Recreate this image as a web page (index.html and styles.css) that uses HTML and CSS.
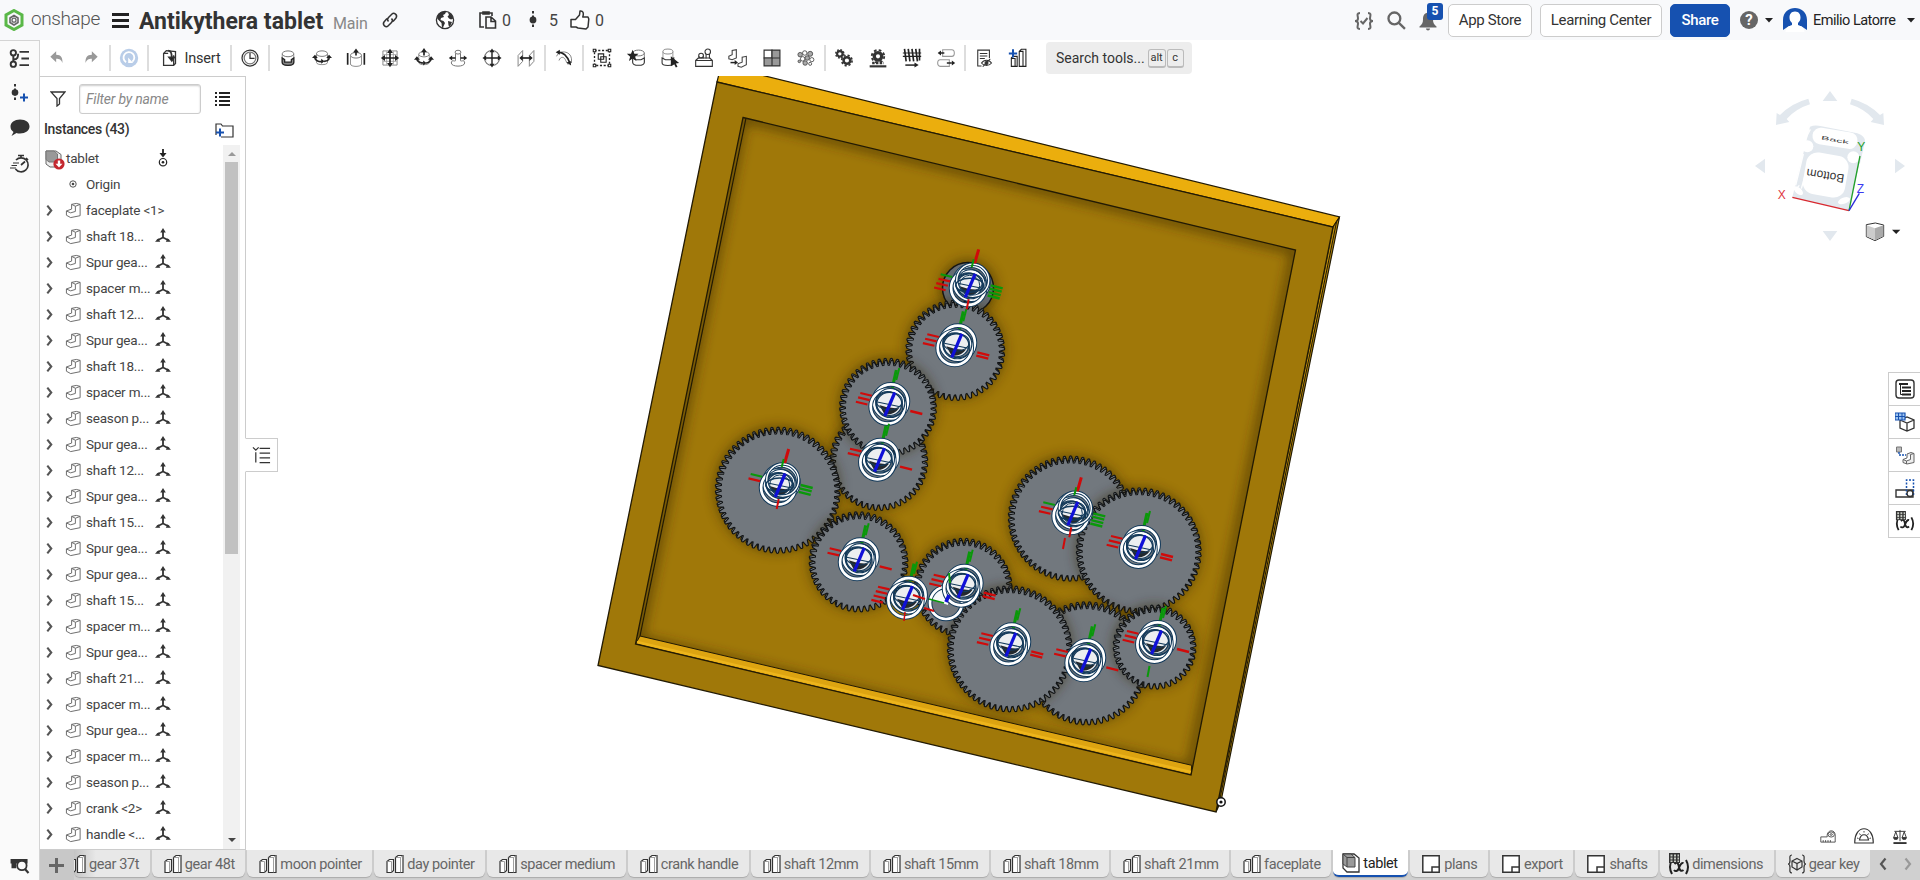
FILE: index.html
```html
<!DOCTYPE html>
<html lang="en">
<head>
<meta charset="utf-8">
<title>Antikythera tablet</title>
<link rel="stylesheet" href="styles.css">
</head>
<body>
<svg class="defs" width="0" height="0">
  <symbol id="caret" viewBox="0 0 10 6"><path d="M0 0h10L5 5.5z" fill="#222"/></symbol>
  <symbol id="part" viewBox="0 0 18 18"><path d="M1.500 9.500 7 7.500V2.500L12 1.500l4 1v12L6 16.500l-4.500-2.500zM1.500 9.500l4.500 2 5-1.500V4.500L7 2.500M11 4.500l5-2" fill="#fff" stroke="#666" stroke-width="1" stroke-linejoin="round"/></symbol>
  <symbol id="axes" viewBox="0 0 16 16"><path d="M8 2v8M8 9.500 2 12.500M8 9.500l6 3" stroke="#333" stroke-width="1.800" fill="none"/><path d="M8 0l2.800 4.500H5.200zM0 13.800l3.400-3.600 1.800 3.600zM16 13.800l-3.400-3.600-1.800 3.600z" fill="#333"/></symbol>
  <symbol id="chev" viewBox="0 0 8 14"><path d="M1.500 1.500 6 7l-4.500 5.500" fill="none" stroke="#555" stroke-width="2.400"/></symbol>
  <symbol id="studio" viewBox="0 0 18 20"><path d="M1 7.500 3.500 5.500H7.500V16.500L5.500 18.500H1z" fill="#fff" stroke="#333" stroke-width="1.200"/><path d="M1 7.500h4.500v11" fill="none" stroke="#888" stroke-width=".8"/><path d="M9.500 3.500 12 1.500h5v17H9.500z" fill="#fff" stroke="#333" stroke-width="1.200"/><path d="M9.500 3.500h5v15M14.500 3.500 17 1.500" fill="none" stroke="#888" stroke-width=".8"/></symbol>
  <symbol id="sheet" viewBox="0 0 18 18"><path d="M.8 .8h16.400v16.400H.8zM10 17v-5h7" fill="#fff" stroke="#333" stroke-width="1.500"/></symbol>
  <symbol id="asm" viewBox="0 0 18 20"><path d="M1 1h11l5 4v14H5l-4-4z" fill="#fff" stroke="#333" stroke-width="1.300"/><path d="M1 1h8l4 3.500V14H5l-4-3z" fill="#999" stroke="#444"/><path d="M5 4.500h8M5 4.500V14M5 4.500 1 1" stroke="#444" fill="none"/></symbol>
  <symbol id="varx" viewBox="0 0 22 22"><path d="M4 7Q0 14 4 21M18 7q4 7 0 14" fill="none" stroke="#222" stroke-width="2"/><path d="M6.500 11c3-3 4 0 4.500 3s2 5 4.500 3M15.500 10c-3-1-4 4-5 6s-3 3-4.500 1" fill="none" stroke="#222" stroke-width="2"/><path d="M1 0h11v10H1z" fill="#333"/><path d="M2.500 1.500h2v2h-2zm3.500 0h2v2H6zm3.500 0h1.500v2H9.500zM2.500 4.500h2v2h-2zm3.500 0h2v2H6zm3.500 0h1.500v2H9.500zM2.500 7.500h2v1.500h-2zm3.500 0h2v1.500H6zm3.500 0h1.500v1.500H9.500z" fill="#c8ccc4"/></symbol>
  <symbol id="cyl" viewBox="0 0 16 20"><path d="M1 5v11c0 4 14 4 14 0V5" fill="#fff" stroke="#888" stroke-width="1.200"/><ellipse cx="8" cy="5" rx="7" ry="3.500" fill="#fff" stroke="#777" stroke-width="1.200"/></symbol>
</svg>

<header class="top">
  <svg class="logo" viewBox="0 0 20 22"><path d="M10 1.500 18 6v10l-8 4.500L2 16V6z" fill="none" stroke="#5ab848" stroke-width="3"/><path d="M10 6.500 14 9v4.500L10 16l-4-2.500V9z" fill="none" stroke="#666" stroke-width="1.600"/><circle cx="10" cy="11.200" r="2" fill="none" stroke="#666" stroke-width="1.300"/></svg>
  <span class="brand">onshape</span>
  <i class="burger"></i>
  <h1>Antikythera tablet</h1>
  <span class="main">Main</span>
  <svg class="link" viewBox="0 0 18 18" fill="none" stroke="#333" stroke-width="1.500"><path d="M7.500 10.500c-1.500-1.500-1-3 0-4L11 3c2-2 6 1 4 4l-3 3.500"/><path d="M10.500 7.500c1.500 1.500 1 3 0 4L7 15c-2 2-6-1-4-4l3-3.500"/></svg>
  <svg class="globe" viewBox="0 0 20 20"><circle cx="10" cy="10" r="8.600" fill="#fff" stroke="#333" stroke-width="1.300"/><path d="M3 4.500C5 2 9 1 11 2l-1 2-2 1 1 2-3 1-.5 2 3 1 1.500 2-2 4.500-1 .5-.5-5L3 9.500 2 8zM13 2.500c3 1 5 3.500 5.300 6L16 9.500l-2-1-1.500-2L14 5zM13 11l4 1-2 4.500-1.500-1z" fill="#333"/></svg>
  <svg class="clip" viewBox="0 0 18 20" fill="none" stroke="#333" stroke-width="1.600"><path d="M5 17H1V3h12v3M4 4V2h6v2z"/><path d="M7 7h5l4.500 4v7H7zM12 7v4.500h4"/></svg>
  <b class="n n1">0</b>
  <svg class="ver" viewBox="0 0 8 20"><path d="M4 1v18" stroke="#333" stroke-width="2" stroke-dasharray="2.500 2"/><circle cx="4" cy="10" r="3.400" fill="#333"/></svg>
  <b class="n n2">5</b>
  <svg class="thumb" viewBox="0 0 20 20"><path d="M1 9.500h4.500L9.500 5l.5-4c3-.5 4 2 2.800 6H18l.8 2-.8 8-2 2-8-1-2-1H1z" fill="#fff" stroke="#333" stroke-width="1.500" stroke-linejoin="round"/></svg>
  <b class="n n3">0</b>
  <div class="right">
    <svg class="chk" viewBox="0 0 20 18" fill="none" stroke="#666" stroke-width="2"><path d="M6 1C2 1 4 4 4 6.500S2 9 1 9c1 0 3 0 3 2.500S2 17 6 17M14 1c4 0 2 3 2 5.500S18 9 19 9c-1 0-3 0-3 2.500s2 5.500-2 5.500M6.500 9l2.500 2.500L13.500 6"/></svg>
    <svg class="mag" viewBox="0 0 18 18" fill="none" stroke="#666" stroke-width="2.200"><circle cx="7" cy="7" r="5.600"/><path d="m11 11 6 6"/></svg>
    <span class="bell"><svg viewBox="0 0 18 18"><path d="M9 0c4.500 1 5 4 5 7 0 3.500 1 5 3.500 7v1H.5v-1C3 12 4 10.500 4 7c0-3 .5-6 5-7zM7 16h4c0 2.500-4 2.500-4 0z" fill="#666"/></svg><em>5</em></span>
    <button class="btn app">App Store</button>
    <button class="btn learn">Learning Center</button>
    <button class="btn share">Share</button>
    <span class="help">?</span>
    <svg class="caret c1"><use href="#caret"/></svg>
    <svg class="avatar" viewBox="0 0 24 24"><path d="M0 22V12C0-4 24-4 24 12v10l-6-4H6z" fill="#1651b0"/><path d="M12 3.500c4 0 5.500 3 5.500 6 0 2.500-1 4-2.500 5.500v2c4 1.500 6 3 6.500 7h-19C3 20 5 18.500 9 17v-2c-1.500-1.500-2.500-3-2.500-5.500 0-3 1.500-6 5.500-6z" fill="#fff"/></svg>
    <span class="user">Emilio Latorre</span>
    <svg class="caret c2"><use href="#caret"/></svg>
  </div>
</header>

<div class="work">
  <nav class="rail">
    <svg class="r1" viewBox="0 0 22 20" fill="none" stroke="#333" stroke-width="2"><circle cx="4.500" cy="4" r="2.800"/><circle cx="4.500" cy="16" r="2.800"/><path d="M4.500 7v6M4.500 11c5 0 5-3 5-6M11 3h10M13 10h8M11 17h10"/></svg>
    <svg class="r2" viewBox="0 0 24 20"><path d="M5 1v18" stroke="#333" stroke-width="2" stroke-dasharray="2.500 2"/><circle cx="5" cy="9.500" r="3.300" fill="#333"/><path d="M14 10.500v8M10 14.500h8" stroke="#1651b0" stroke-width="2"/></svg>
    <svg class="r3" viewBox="0 0 20 18"><path d="M10 .5c6 0 9.500 3 9.500 7s-4 7-9.500 7c-1.500 0-2.500 0-3.500-.5L1.500 17l2-4C1.500 11.500.5 10 .5 7.500c0-4 4-7 9.500-7z" fill="#333"/></svg>
    <svg class="r4" viewBox="0 0 20 20" fill="none" stroke="#333" stroke-width="1.700"><path d="M6 6a7 7 0 1 1-.5 9M8 1.500h6M11 2v2.500M11 11l4-3.500M16 4l2 2"/><path d="M3 9h6M1.500 11.500H7M0 14h6" stroke-width="1.200"/></svg>
    <svg class="r5" viewBox="0 0 20 18"><path d="M0 2h18v5H6v5H1V7H0z" fill="#333"/><circle cx="12" cy="9" r="5" fill="#fafafa" stroke="#333" stroke-width="1.900"/><path d="m15 12.500 4 4.500" stroke="#333" stroke-width="2.300"/></svg>
  </nav>
  <div class="body">
    <div class="tools">
      <span><svg viewBox="0 0 24 24"><path d="M4 10.500 11 4v4c6 0 8 4 7.500 10C17 14 15 13 11 13v4z" fill="#999"/></svg></span>
      <span><svg viewBox="0 0 24 24"><path d="M20 10.500 13 4v4C7 8 5 12 5.500 18 7 14 9 13 13 13v4z" fill="#999"/></svg></span>
      <i></i>
      <span><svg viewBox="0 0 24 24"><circle cx="12" cy="12" r="11" fill="#b9cde8"/><path d="M8.500 17a6.500 6.500 0 1 1 7.500-.5" fill="none" stroke="#fff" stroke-width="2.200"/><path d="M11 11.500 17 18h-6z" fill="#fff"/></svg></span>
      <i></i>
      <span class="ins"><svg viewBox="0 0 24 24" fill="none" stroke="#333" stroke-width="1.400"><path d="m5 7 3-3 10 1v13l-2 2H5zM5 7h5M16 20V9"/><path d="M10 4c3 0 4 3 4 8" stroke-width="2"/><path d="m10.500 11 3.500 4.500 3-4.500z" fill="#222"/></svg><b>Insert</b></span>
      <i></i>
      <span><svg viewBox="0 0 24 24" fill="none" stroke="#333" stroke-width="1.500"><circle cx="12" cy="12" r="9.600"/><circle cx="12" cy="12" r="7" stroke="#777"/><path d="M12 6v6.500h5.500"/></svg></span>
      <i></i>
      <span><svg viewBox="0 0 24 24"><use href="#cyl" x="4" y="2" width="16" height="20"/><path d="M5 12v5c0 5 14 5 14 0v-5l-3 2v3H8v-3z" fill="#888" stroke="#222" stroke-width="1.500"/></svg></span>
      <span><svg viewBox="0 0 24 24"><use href="#cyl" x="4" y="2" width="16" height="19"/><path d="M3.500 12c0 3 6 5 8 4M20.500 12c0 3-4 4-6 4" fill="none" stroke="#222" stroke-width="2"/><path d="m0 12 3.500-4L7 12zM17 12l3.500-4 3.500 4zM11 13v6l4-3z" fill="#222"/></svg></span>
      <span><svg viewBox="0 0 24 24"><use href="#cyl" x="4" y="4" width="16" height="19"/><path d="M2 6v14M22 6v14M12 3v6" stroke="#222" stroke-width="2"/><path d="m8.500 5.500 3.500-5 3.500 5z" fill="#222"/></svg></span>
      <span><svg viewBox="0 0 24 24"><path d="M3.500 3.500h17v17h-17z" fill="none" stroke="#777"/><path d="M8 4v16M16 4v16M4 8h16M4 16h16" stroke="#999"/><path d="M12 4v16M4 12h16" stroke="#222" stroke-width="2"/><path d="m8.500 6 3.500-5 3.500 5zM8.500 18l3.500 5 3.500-5zM6 8.500 1 12l5 3.500zM18 8.500l5 3.500-5 3.500z" fill="#222"/></svg></span>
      <span><svg viewBox="0 0 24 24"><use href="#cyl" x="4" y="3" width="16" height="18"/><path d="M3.500 13c0 4 6 5 8 5M20.500 13c0 3-4 5-6 5M12 3v6" fill="none" stroke="#222" stroke-width="2"/><path d="m0 14 3.500-4L7 14zM17 14l3.500-4 3.500 4zM11 15v6l4-3zM8.500 5 12 0l3.500 5z" fill="#222"/></svg></span>
      <span><svg viewBox="0 0 24 24"><path d="M4 18c0 5 16 5 16 0s-5-1-5-3V5H9v10c0 2-5-2-5 3z" fill="#fff" stroke="#777" stroke-width="1.200"/><ellipse cx="12" cy="5" rx="3.500" ry="2.300" fill="#fff" stroke="#777" stroke-width="1.200"/><path d="M4 12h5M15 12h5" stroke="#222" stroke-width="2"/><path d="m1 12 4-3v6zM23 12l-4-3v6z" fill="#222"/></svg></span>
      <span><svg viewBox="0 0 24 24"><circle cx="12" cy="12" r="9" fill="none" stroke="#777" stroke-width="1.400"/><path d="M12 3v18M3 12h18" stroke="#222" stroke-width="1.700"/><path d="m9 5 3-4.500L15 5zM9 19l3 4.500 3-4.500zM5 9 .5 12 5 15zM19 9l4.500 3-4.500 3z" fill="#222"/></svg></span>
      <span><svg viewBox="0 0 24 24"><path d="M2.500 9 8 3v13l-5.500 6zM16 9l5.500-6v13L16 22z" fill="none" stroke="#888" stroke-width="1.200"/><path d="M7 12h10" stroke="#222" stroke-width="2"/><path d="m4 12 4-3.500v7zM20 12l-4-3.500v7z" fill="#222"/></svg></span>
      <i></i>
      <span><svg viewBox="0 0 24 24"><path d="M3 10c3-8 17-7 18 3v5M6 15c2-6 7-4 8 0l3 5" fill="none" stroke="#888" stroke-width="1.200"/><path d="M5 5c7 0 11 5 14 13" fill="none" stroke="#222" stroke-width="2"/><path d="m2 5 5-3v6zM20.500 21 15 17.500l5-2z" fill="#222"/></svg></span>
      <i></i>
      <span><svg viewBox="0 0 24 24" fill="none" stroke="#222"><path d="M3 3h18v18H3z" stroke-width="1.600" stroke-dasharray="2.500 2"/><path d="M1.500 1.500h3v3h-3zM19.500 1.500h3v3h-3zM1.500 19.500h3v3h-3zM19.500 19.500h3v3h-3z" fill="#fff" stroke-width="1.300"/><path d="M7.500 7h6.500v6.500H7.500zM10.500 10.500h6.500v6.500h-6.500z" stroke-width="1.300"/></svg></span>
      <span><svg viewBox="0 0 24 24"><use href="#cyl" x="7" y="1" width="16" height="20"/><path d="M8 12v5c0 5 14 5 14 0v-5l-4 2h-6z" fill="#fff" stroke="#333" stroke-width="1.300"/><path d="m8 2 2 5h5l-4 3.500 1.500 5L8 12.500l-4.500 3L5 10.500 1 7h5z" fill="#222"/></svg></span>
      <span><svg viewBox="0 0 24 24"><use href="#cyl" x="2" y="0" width="15" height="17"/><path d="M2.500 12v6c0 4 14 4 14 0v-6l-4 2h-6z" fill="#fff" stroke="#333" stroke-width="1.300"/><path d="m13 10 10 8-4 .5 2 4-2 1-2-4-4 2.500z" fill="#222"/></svg></span>
      <span><svg viewBox="0 0 24 24" fill="#fff" stroke="#333" stroke-width="1.300"><path d="M2 15h20v7H2zM2 15l3-3h14l3 3M6 13v-3h5v3M14.500 13V7h4v6"/><circle cx="8.500" cy="9" r="2.800"/><circle cx="16.500" cy="4.500" r="3.300"/></svg></span>
      <span><svg viewBox="0 0 24 24" fill="#fff" stroke="#444" stroke-width="1.300"><path d="M1 10 5 8V3l5-1v10l-5 2-4-1zM12 19l5-2v-6l5-1v10l-6 3-4-1z"/><path d="M3 17.500h6" stroke="#222" stroke-width="1.800"/><path d="m8 14.500 4 3-4 3z" fill="#222" stroke="none"/></svg></span>
      <span><svg viewBox="0 0 24 24"><path d="M2.500 2.500H12V12H2.500z" fill="#fff" stroke="#333" stroke-width="1.400"/><path d="M12 2.500h9.500V21.500h-19V12H12z" fill="#999" stroke="#333" stroke-width="1.400"/><path d="M12 12h9.500M12 12v9.500" stroke="#333" stroke-width="1.400"/></svg></span>
      <span><svg viewBox="0 0 24 24" fill="#aaa" stroke="#444" stroke-width="1"><circle cx="5" cy="8" r="2.700"/><circle cx="10.500" cy="6" r="2.700" fill="#fff"/><circle cx="17" cy="7" r="3"/><circle cx="8" cy="13" r="2.700" fill="#fff"/><circle cx="13.500" cy="12" r="2.700"/><circle cx="19" cy="14" r="2.500" fill="#fff"/><circle cx="11" cy="18" r="2.700"/><circle cx="4" cy="16" r="1.600"/><circle cx="17" cy="19" r="1.800" fill="#fff"/></svg></span>
      <i></i>
      <span><svg viewBox="0 0 24 24" fill="none" stroke="#333"><circle cx="7" cy="7" r="3.300" stroke-width="2.600"/><circle cx="7" cy="7" r="4.900" stroke-width="1.800" stroke-dasharray="2 1.850"/><circle cx="15.500" cy="15" r="4" stroke-width="3"/><circle cx="15.500" cy="15" r="6.200" stroke-width="2" stroke-dasharray="2.600 2.270"/></svg></span>
      <span><svg viewBox="0 0 24 24" fill="none" stroke="#333"><circle cx="12" cy="10" r="4.500" stroke-width="4"/><circle cx="12" cy="10" r="7.500" stroke-width="2.200" stroke-dasharray="3.200 2.690"/><path d="M5 18h14" stroke-width="3" stroke-dasharray="3 1.500"/><path d="M2 22h20" stroke-width="2.600"/></svg></span>
      <span><svg viewBox="0 0 24 24" fill="none" stroke="#222"><path d="M1 6h22M1 10h22" stroke-width="1.400"/><path d="m3 1 2 15M7.500 1l2 15M12 1l2 15M16.500 1l2 15M21 1v14" stroke-width="2"/><path d="M4 20.500h12" stroke-width="1.800"/><path d="m15 17.500 5 3-5 3z" fill="#222" stroke="none"/></svg></span>
      <span><svg viewBox="0 0 24 24" fill="#fff" stroke="#999" stroke-width="1.300"><path d="M8 2h11c4 0 4 8 0 8H8z"/><path d="M5 14h11v8H5c-4 0-4-8 0-8z"/><path d="M4 6h6M13 18h6" stroke="#222" stroke-width="1.800"/><path d="m2 6 4-3v6zM23 18l-4-3v6z" fill="#222" stroke="none"/></svg></span>
      <i></i>
      <span><svg viewBox="0 0 24 24" fill="none" stroke="#333" stroke-width="1.300"><path d="M9 21.500H4.500v-19h14V12M7 6.500h9M7 9.500h9M7 12.500h6"/><path d="M9 18c3-4.500 9-4.500 12 0-3 4-9 4-12 0z" fill="#fff"/><circle cx="15" cy="18" r="1.800" fill="#333"/><path d="m10.500 22.500 9-9.500"/></svg></span>
      <span><svg viewBox="0 0 24 24" fill="#fff" stroke="#222" stroke-width="1.300"><path d="M13.500 4 16 1.500h5.500V22h-8zM13.500 4H18v18M4 12l2-2h5v12H4zM4 12.500h4.500V22"/><path d="M6 1.500v10M1 6.500h10" stroke="#1651b0" stroke-width="2.400"/></svg></span>
      <div class="search">Search tools... <kbd class="alt">alt</kbd><kbd>c</kbd></div>
    </div>
    <div class="mid">
      <aside class="panel">
        <div class="filter">
          <svg viewBox="0 0 16 16"><path d="M1 1h14L9.500 7.500V13L7 15V7.500z" fill="none" stroke="#333" stroke-width="1.300"/></svg>
          <div class="inp">Filter by name</div>
          <i class="list"></i>
        </div>
        <div class="inst"><span>Instances (43)</span><svg viewBox="0 0 19 16"><path d="M1 12V1h5l1.500 2H18v11H6" fill="none" stroke="#333" stroke-width="1.200"/><path d="M5 5.500v8M1 9.500h8" stroke="#1651b0" stroke-width="2"/></svg></div>
        <div class="tree">
          <div class="rows" id="rows">
            <div class="row root"><svg class="ra" viewBox="0 0 20 20"><path d="M1 1h10l5 3.500V17H5l-4-3z" fill="#eee" stroke="#666"/><path d="M1 1h8l3.500 3V12H4L1 9.500z" fill="#999" stroke="#777"/><circle cx="14" cy="14" r="5.600" fill="#c4262e"/><path d="M14 10.500v4" stroke="#fff" stroke-width="2.400"/><path d="M10.500 13.800h7L14 17.500z" fill="#fff"/></svg><span>tablet</span><svg class="fix" viewBox="0 0 10 18"><path d="M5 0v5" stroke="#222" stroke-width="1.800"/><path d="M1.500 4h7L5 8.500z" fill="#222"/><circle cx="5" cy="13.200" r="3.700" fill="none" stroke="#222" stroke-width="1.200"/><circle cx="5" cy="13.200" r="1.300" fill="#222"/></svg></div>
            <div class="row org"><svg viewBox="0 0 8 8"><circle cx="4" cy="4" r="3.200" fill="none" stroke="#555"/><circle cx="4" cy="4" r="1.300" fill="#444"/></svg><span>Origin</span></div>
          </div>
          <div class="bar"><i class="up"></i><i class="thumbbar"></i><i class="down"></i></div>
        </div>
      </aside>
      <main class="stage">
        <svg id="scene" viewBox="246 76 1674 774">
          <defs>
            <filter id="b8" x="-30%" y="-30%" width="160%" height="160%"><feGaussianBlur stdDeviation="6"/></filter>
            <clipPath id="floor"><path d="M743 117.500 1295.500 250 1191 775 635.500 644z"/></clipPath>
          </defs>
          <path d="M717 82 719 74 757 74 1339.500 217 1333 227z" fill="#ebae0d" stroke="#221a04" stroke-width="1.200"/>
          <path d="M1333 227 1339.500 217 1221 801 1216 812z" fill="#b88a0c" stroke="#221a04" stroke-width="1.200"/>
          <path d="M1336.500 222 1218.500 806" stroke="#221a04"/>
          <path d="M717 82 1333 227 1216 812 598 665.500z" fill="#a07809" stroke="#221a04" stroke-width="1.300"/>
          <g clip-path="url(#floor)">
            <path d="M743 117.500 1295.500 250 1191 770 638 640z" fill="none" stroke="#443000" stroke-opacity=".7" stroke-width="9" filter="url(#b8)"/>
            <path d="M640 636 1191.700 765.300 1191 775 635.500 644z" fill="#dda411" stroke="#221a04"/>
            <path d="M637 642 1191 772" stroke="#edb51c" stroke-width="2.500"/>
            <path d="M746 118 640 636" stroke="#221a04" stroke-width="1.200"/>
          </g>
          <path d="M743 117.500 1295.500 250 1191 775 635.500 644z" fill="none" stroke="#221a04" stroke-width="1.300"/>
          <g id="gears"></g>
          <g id="shafts"></g>
          <circle cx="1221" cy="802" r="4.200" fill="#fff" stroke="#111" stroke-width="1.500"/><circle cx="1221" cy="802" r="1.600" fill="#111"/>
          <g transform="translate(1740 80) scale(.33333)">
            <g fill="#e2e8ee"><path d="M270 33l22 30h-44zM270 483l22-30h-44zM45 258l30-22v44zM495 258l-30-22v44z"/><path d="M205 56l5 17q-42 13-70 44l8 9-40 9 2-36 10 6q35-36 85-49zM335 56l-5 17q42 13 70 44l-8 9 40 9-2-36-10 6q-35-36-85-49z"/>
            <path d="M210 140 Q225 134 245 139L352 160Q376 168 375 185L327 392 157 352Z"/></g>
            <path d="M211 148 193 182M190 222 167 316M184 326 205 250M165 330 178 316M360 250 335 375" stroke="#fff" stroke-width="4" fill="none"/>
            <g fill="#fff"><rect x="217" y="150" width="136" height="50" rx="24" transform="rotate(9 285 175)"/><rect x="193" y="222" width="128" height="126" rx="34" transform="rotate(10 257 285)"/><circle cx="202" cy="199" r="18"/><circle cx="340" cy="232" r="18"/><ellipse cx="175" cy="332" rx="17" ry="9" transform="rotate(42 175 332)"/><ellipse cx="312" cy="362" rx="19" ry="9" transform="rotate(-20 312 362)"/></g>
            <text class="face" transform="translate(258 275) rotate(189)" text-anchor="middle" font-size="36">Bottom</text>
            <text class="face" transform="translate(284 185) rotate(10) scale(1.5 .6)" text-anchor="middle" font-size="25">Back</text>
            <g fill="none" stroke-width="4"><path d="M157 352 327 392" stroke="#d8282f"/><path d="M360 228 327 392" stroke="#23a02c"/><path d="M358 340 327 392" stroke="#2b2bd8"/></g>
            <g class="axis" text-anchor="middle" font-size="36"><text x="125" y="358" fill="#e0383e">X</text><text x="364" y="213" fill="#23a02c">Y</text><text x="361" y="340" fill="#3a3af0">Z</text></g>
            <path d="M379 434 406 429 431 435V469L405 482 379 470z" fill="#fff" stroke="#333" stroke-width="3"/><path d="M380 436 405 445 405 481 380 469z" fill="#ccc"/><path d="M405 445 430 436V468L405 481z" fill="#aaa"/>
            <path d="M456 449h25l-12.500 13z" fill="#222"/>
          </g>
        </svg>
        <div class="fly"><svg viewBox="0 0 20 18" fill="none" stroke="#333" stroke-width="1.300"><path d="M1 1l3 3 3-3M8 2h11M8 7h11M8 12h11M8 17h11M4 6v11"/></svg></div>
        <div class="side">
          <span><svg viewBox="0 0 20 20"><rect x="1" y="1" width="18" height="18" rx="3" fill="none" stroke="#333" stroke-width="1.400"/><path d="M4 5h9M7 8.500h9M7 12h9M7 15.500h9" stroke="#222" stroke-width="2"/><path d="M5.500 5v10.500H8" fill="none" stroke="#222"/></svg></span>
          <span><svg viewBox="0 0 20 20"><path d="M5 8l7-3 7 3v8l-7 3-7-3zM5 8l7 3 7-3M12 11v8" fill="#fff" stroke="#333" stroke-width="1.300"/><path d="M0 1h10v7H0z" fill="#9cc3f0" stroke="#1651b0" stroke-width="1.200"/><path d="M3.500 1v7M7 1v7M0 4.500h10" stroke="#1651b0"/></svg></span>
          <span><svg viewBox="0 0 20 20"><path d="M1.500 2h5v5h-5z" fill="#bbb" stroke="#777"/><path d="M4 7v3h7" fill="none" stroke="#1651b0" stroke-dasharray="2 1" stroke-width="1.400"/><path d="M8 14.500l4-1.500V9l4-1.500 3 1v9L12 19l-4-1.500zM8 14.500l3.500 1.500 4-1.500V9.500l3.500-1M11.500 16v3" fill="#eee" stroke="#666" stroke-width="1"/></svg></span>
          <span><svg viewBox="0 0 20 20" fill="none"><path d="M1 12h17v7H1z" stroke="#333" stroke-width="1.400"/><path d="M11.500 17V2h7v15" stroke="#1651b0" stroke-width="1.500" stroke-dasharray="2 1.500"/><circle cx="15" cy="15.500" r="3" stroke="#333" stroke-width="1.300"/></svg></span>
          <span><svg viewBox="0 0 22 22"><use href="#varx"/></svg></span>
        </div>
        <div class="measure">
          <svg viewBox="0 0 20 16" fill="#fff" stroke="#444" stroke-width="1.100"><path d="M1 8.500h8c-1-9 9-10 10-3V15H1z"/><path d="M4 15v-2.500M7 15v-2.500M10 15v-2.500M13 15v-2.500"/><ellipse cx="14" cy="5.500" rx="4" ry="3.200"/><ellipse cx="14" cy="5.500" rx="1.500" ry="1"/></svg>
          <svg viewBox="0 0 20 16" fill="none" stroke="#333" stroke-width="1.200"><path d="M.8 15C0-4 20-4 19.200 15zM5.500 12c1-7 8-7 9 0z"/><path d="M3 10l1.500.5M5.500 5.500l1 1.500M10 3v1.500M14.500 5.500l-1 1.500M17 10l-1.500.5" stroke-width=".9"/></svg>
          <svg viewBox="0 0 16 16" fill="none" stroke="#333" stroke-width="1"><path d="M8 1v12M2 2.500h12M3.500 3 1.500 8.500M3.500 3 5.500 8.500M12.500 3 10.500 8.500M12.500 3 14.500 8.500"/><path d="M1 9h5L5 11H2zM10 9h5L14 11h-3z" fill="#333"/><path d="M1 15h14" stroke-width="2"/></svg>
        </div>
      </main>
    </div>
    <footer class="tabs">
      <div class="plus"></div>
      <div class="strip">
        <div class="tab first"><svg class="st"><use href="#studio"/></svg>gear 37t</div>
        <div class="tab"><svg class="st"><use href="#studio"/></svg>gear 48t</div>
        <div class="tab"><svg class="st"><use href="#studio"/></svg>moon pointer</div>
        <div class="tab"><svg class="st"><use href="#studio"/></svg>day pointer</div>
        <div class="tab"><svg class="st"><use href="#studio"/></svg>spacer medium</div>
        <div class="tab"><svg class="st"><use href="#studio"/></svg>crank handle</div>
        <div class="tab"><svg class="st"><use href="#studio"/></svg>shaft 12mm</div>
        <div class="tab"><svg class="st"><use href="#studio"/></svg>shaft 15mm</div>
        <div class="tab"><svg class="st"><use href="#studio"/></svg>shaft 18mm</div>
        <div class="tab"><svg class="st"><use href="#studio"/></svg>shaft 21mm</div>
        <div class="tab"><svg class="st"><use href="#studio"/></svg>faceplate</div>
        <div class="tab on"><svg class="st"><use href="#asm"/></svg>tablet</div>
        <div class="tab"><svg class="sh"><use href="#sheet"/></svg>plans</div>
        <div class="tab"><svg class="sh"><use href="#sheet"/></svg>export</div>
        <div class="tab"><svg class="sh"><use href="#sheet"/></svg>shafts</div>
        <div class="tab dim"><svg class="vx"><use href="#varx"/></svg>dimensions</div>
        <div class="tab"><svg class="st" viewBox="0 0 18 20" fill="none" stroke="#333" stroke-width="1.200"><path d="M4 1C1 1 2 4 2 6.500S1 10 0 10c1 0 2 1 2 3.500S1 19 4 19M14 1c3 0 2 3 2 5.500s1 3.500 2 3.500c-1 0-2 1-2 3.500s1 5.500-2 5.500M9 4.500 14 7v6l-5 3-5-3V7zM4 7l5 2.500L14 7M9 9.500V16"/></svg>gear key</div>
      </div>
      <div class="arr"><svg viewBox="0 0 8 14"><path d="M6.500 1.500 2 7l4.500 5.500" fill="none" stroke="#555" stroke-width="2.200"/></svg><svg viewBox="0 0 8 14"><path d="M1.500 1.500 6 7l-4.500 5.500" fill="none" stroke="#999" stroke-width="2.200"/></svg></div>
    </footer>
  </div>
</div>
<script src="main.js"></script>
</body>
</html>
```
FILE: styles.css
```css
* { box-sizing: border-box; }
body { margin: 0; width: 1920px; height: 880px; overflow: hidden; background: #fff; color: #333; font-family: Roboto, "Liberation Sans", sans-serif; display: flex; flex-direction: column; }
svg { display: block; flex: none; }
.defs { position: absolute; }
i, em { font-style: normal; display: block; flex: none; }

.top { height: 40px; flex: none; background: #f8f9fb; display: flex; align-items: center; white-space: nowrap; }
.top > * { flex: none; }
.logo { width: 20px; height: 22px; margin-left: 4px; }
.brand { width: 68px; margin-left: 7px; font-size: 19px; font-weight: 300; color: #555; letter-spacing: -.4px; padding-bottom: 3px; }
.burger { width: 17px; height: 15px; margin-left: 13px; border-top: 3px solid #222; border-bottom: 3px solid #222; background: linear-gradient(#222, #222) 0 3px / 100% 3px no-repeat; }
h1 { margin: 0 0 0 10px; width: 185px; font-size: 23px; font-weight: 700; color: #333; padding-top: 3px; letter-spacing: 0; }
.main { margin-left: 9px; width: 34px; font-size: 16px; letter-spacing: -.2px; color: #888; padding-top: 7px; }
.link { width: 18px; height: 18px; margin-left: 14px; }
.globe { width: 20px; height: 20px; margin-left: 36px; }
.clip { width: 18px; height: 20px; margin-left: 24px; }
.n { font-weight: 400; font-size: 16px; color: #444; letter-spacing: -.5px; }
.n1 { margin-left: 5px; width: 19px; }
.ver { width: 8px; height: 20px; margin-left: 8px; }
.n2 { margin-left: 12px; width: 12px; }
.thumb { width: 20px; height: 20px; margin-left: 9px; }
.n3 { margin-left: 5px; }
.right { margin-left: auto; display: flex; align-items: center; width: 566px; height: 40px; }
.right > * { flex: none; }
.chk { width: 20px; height: 18px; margin: 1px 0 0 0; }
.mag { width: 19px; height: 19px; margin: 1px 0 0 13px; }
.bell { position: relative; margin-left: 13px; width: 29px; }
.bell svg { width: 18px; height: 19px; margin-top: 3px; }
.bell em { position: absolute; left: 8px; top: -6px; width: 16px; height: 17px; border-radius: 3px; background: #1651b0; color: #fff; font-size: 12px; font-weight: 700; text-align: center; line-height: 16px; }
.btn { font: 15px Roboto, sans-serif; height: 36px; background: #fff; color: #333; border: 1px solid #ccc; border-radius: 5px; padding: 0; letter-spacing: -.35px; height: 33px; }
.app { width: 84px; }
.learn { width: 122px; margin-left: 8px; }
.share { width: 60px; margin-left: 8px; background: #1651b0; border-color: #1651b0; color: #fff; font-weight: 500; }
.help { width: 18px; height: 18px; margin-left: 10px; border-radius: 50%; background: #666; color: #fff; font-weight: 700; font-size: 15px; line-height: 18px; text-align: center; }
.caret { width: 8px; height: 5px; }
.c1 { margin-left: 7px; }
.avatar { width: 24px; height: 24px; margin-left: 10px; }
.user { margin-left: 6px; width: 88px; font-size: 14.500px; letter-spacing: -.5px; color: #222; }
.c2 { margin-left: 6px; }

.work { flex: 1; display: flex; min-height: 0; }
.rail { width: 40px; flex: none; border: solid #d4d4d4; border-width: 1px 1px 0 0; background: #fafafa; display: flex; flex-direction: column; align-items: center; }
.r1 { width: 21px; height: 19px; margin-top: 8px; }
.r2 { width: 24px; height: 20px; margin: 15px 0 0 4px; }
.r3 { width: 20px; height: 18px; margin-top: 16px; }
.r4 { width: 20px; height: 20px; margin-top: 17px; }
.r5 { width: 20px; height: 17px; margin: auto 0 6px 0; }
.body { flex: 1; min-width: 0; display: flex; flex-direction: column; }

.tools { height: 36px; flex: none; display: flex; align-items: center; }
.tools > span { width: 34px; flex: none; display: flex; justify-content: center; }
.tools > i { width: 2px; height: 26px; margin: 0 1px; background: #ddd; }
.tools svg { width: 20px; height: 20px; }
.tools > .ins { width: 79px; align-items: center; gap: 4px; }
.ins svg { width: 22px; height: 22px; }
.ins b { font-weight: 400; font-size: 14.500px; letter-spacing: -.2px; }
.search { margin-left: 11px; width: 146px; height: 32px; border-radius: 4px; background: #ededed; display: flex; align-items: center; padding-left: 10px; font-size: 14px; letter-spacing: 0; white-space: nowrap; }
kbd { font: 11px Roboto, sans-serif; border: 1px solid #bbb; border-bottom-width: 2px; border-radius: 3px; height: 19px; width: 17px; text-align: center; line-height: 16px; margin-left: 1px; }
.alt { margin-left: 3px; width: 18px; }

.mid { flex: 1; min-height: 0; display: flex; }
.panel { width: 206px; flex: none; border: solid #ccc; border-width: 1px 1px 1px 0; display: flex; flex-direction: column; }
.filter { display: flex; align-items: center; height: 29px; margin-top: 7px; flex: none; }
.filter svg { width: 16px; height: 16px; margin-left: 10px; }
.inp { width: 122px; height: 30px; margin-left: 13px; border: 1px solid #ccc; border-radius: 3px; box-shadow: inset 0 1px 2px #ccc; font-style: italic; color: #888; font-size: 14px; letter-spacing: -.2px; line-height: 28px; padding-left: 6px; }
.list { width: 15px; height: 14px; margin-left: 14px; background: linear-gradient(90deg, transparent 2px, #fff 2px, #fff 4px, transparent 4px), repeating-linear-gradient(#222 0 2px, #fff 2px 4px); }
.inst { height: 32px; flex: none; display: flex; justify-content: space-between; align-items: center; padding: 0 11px 0 4px; font-size: 14px; font-weight: 500; letter-spacing: -.35px; }
.inst svg { width: 19px; height: 16px; margin-top: 4px; }
.tree { flex: 1; min-height: 0; display: flex; justify-content: space-between; overflow: hidden; }
.rows { width: 180px; }
.row { height: 26px; display: flex; align-items: center; font-size: 13.500px; color: #444; white-space: nowrap; }
.row .ch { width: 7px; height: 13px; margin-left: 6px; }
.row .pt { width: 17px; height: 17px; margin: 0 4px 0 12px; }
.row span { width: 69px; letter-spacing: -.2px; }
.row .ax { width: 16px; height: 16px; }
.root .ra { width: 20px; height: 20px; margin: 3px 0 0 5px; }
.root span { width: 92px; margin-left: 1px; }
.fix { width: 10px; height: 18px; }
.org svg { width: 8px; height: 8px; margin: 0 9px 0 29px; }
.bar { width: 17px; margin-right: 5px; background: #f1f1f1; display: flex; flex-direction: column; align-items: center; }
.up, .down { width: 0; border: 4px solid transparent; }
.up { border-bottom-color: #999; margin: 4px 0 6px; border-top-width: 3px; }
.thumbbar { width: 13px; height: 392px; background: #c1c1c1; }
.down { border-top-color: #444; margin: auto 0 3px; }

.stage { flex: 1; min-width: 0; position: relative; }
#scene { width: 1674px; height: 774px; }
.face { fill: #333; font-family: "Liberation Sans", Arial, sans-serif; }
.axis { font-family: "Liberation Sans", Arial, sans-serif; }
.fly { position: absolute; left: -1px; top: 362px; width: 33px; height: 34px; border: 1px solid #ccc; border-left-color: #fff; display: grid; place-items: center; background: #fff; }
.fly svg { width: 19px; height: 18px; }
.side { position: absolute; right: 0; top: 296px; width: 32px; border: solid #ccc; border-width: 1px 0 0 1px; background: #fff; }
.side span { height: 33px; border-bottom: 1px solid #ccc; display: grid; place-items: center; }
.side svg { width: 20px; height: 20px; }
.measure { position: absolute; right: 12px; bottom: 6px; display: flex; gap: 18px; align-items: center; }
.measure svg { width: 16px; height: 15px; }
.measure svg:nth-child(2) { width: 20px; height: 16px; }

.tabs { height: 30px; flex: none; background: #d0d0d0; display: flex; }
.plus { width: 34px; flex: none; background: linear-gradient(#666, #666) 9px 14px / 15px 3px no-repeat, linear-gradient(#666, #666) 15px 8px / 3px 15px no-repeat #c8c8c8; }
.strip { width: 1796px; flex: none; display: flex; gap: 2px; overflow: hidden; }
.tab { flex: 1 0 auto; height: 27px; display: flex; align-items: center; justify-content: flex-start; padding: 1px 9px 0 12px; gap: 3px; font-size: 14.500px; color: #666; background: #e8e8e8; border-radius: 0 0 6px 6px; box-shadow: 0 1px 1px #aaa; white-space: nowrap; letter-spacing: -.4px; }
.first { padding-left: 0; background: linear-gradient(90deg, #c4c4c4, #e8e8e8 22px); }
.first svg { margin-left: -6px; }
.st { width: 18px; height: 20px; }
.sh { width: 18px; height: 18px; margin-right: 1px; }
.vx { width: 22px; height: 22px; }
.dim { padding-left: 8px; gap: 2px; }
.on { background: #fff; color: #222; border-bottom: 2px solid #1651b0; padding-left: 9px; }
.arr { flex: 1; display: flex; align-items: center; justify-content: space-between; padding: 0 8px 2px 9px; }
.arr svg { width: 8px; height: 14px; }
```
FILE: main.js
```js
const names = ['faceplate <1>', 'shaft 18...', 'Spur gea...', 'spacer m...', 'shaft 12...', 'Spur gea...', 'shaft 18...', 'spacer m...', 'season p...', 'Spur gea...', 'shaft 12...', 'Spur gea...', 'shaft 15...', 'Spur gea...', 'Spur gea...', 'shaft 15...', 'spacer m...', 'Spur gea...', 'shaft 21...', 'spacer m...', 'Spur gea...', 'spacer m...', 'season p...', 'crank <2>', 'handle <...'];
const esc = s => s.replace(/</g, '&lt;').replace(/>/g, '&gt;');
document.getElementById('rows').insertAdjacentHTML('beforeend', names.map((n, i) =>
  `<div class="row"><svg class="ch"><use href="#chev"/></svg><svg class="pt"><use href="#part"/></svg><span>${esc(n)}</span>${i ? '<svg class="ax"><use href="#axes"/></svg>' : ''}</div>`).join(''));

// Toothed wheel outline: x, y, outer radius, tooth count
function gear(x, y, r, n) {
  r -= .8;
  const p = [], step = Math.PI * 2 / n, root = r - 5.5;
  const at = (a, q) => p.push((x + Math.cos(a) * q).toFixed(1) + ' ' + (y + Math.sin(a) * q).toFixed(1));
  for (let i = 0; i < n; i++) {
    const a = i * step;
    at(a, root); at(a + step * .2, root + .3); at(a + step * .45, r - .4); at(a + step * .6, r); at(a + step * .75, r - .4);
  }
  const d = 'M' + p.join('L') + 'Z';
  return `<circle cx="${x}" cy="${y}" r="${r + 1}" fill="#2e2200" opacity=".5" filter="url(#b8)"/>` +
    `<path d="${d}" fill="#8d9499" stroke="#15181a" stroke-width="1.2"/>` +
    `<path d="${d}" transform="translate(.6 1.8)" fill="#72787e" stroke="#101214" stroke-width="1.1"/>` +
    `<circle cx="${x}" cy="${y + 1}" r="${root - 1}" fill="#72787e"/>`;
}
const wheels = [[955, 349.5, 50, 48], [878.5, 460, 49.5, 48], [887.7, 406.5, 49, 48], [777.5, 489.3, 63, 62], [858.3, 561, 50, 48], [963, 587, 49.5, 48], [1070, 517.7, 62.5, 62], [1138.5, 550, 63, 62], [1086, 662.5, 61.5, 60], [1154.3, 646.2, 42, 40], [1009.5, 648, 63, 62]];
document.getElementById('gears').innerHTML =
  '<circle cx="968" cy="288" r="29" fill="#2e2200" opacity=".5" filter="url(#b8)"/><circle cx="968" cy="288" r="25.500" fill="#666c72" stroke="#151515" stroke-width="1.500"/>' +
  wheels.map(w => gear(...w)).join('');

const line = (x1, y1, x2, y2, c, w) => `<path d="M${x1} ${y1}L${x2} ${y2}" stroke="${c}" stroke-width="${w}"/>`;
const RED = '#d00a0a', GREEN = '#0a980a', BLUE = '#1010d8', NAVY = '#12395a';
const ring = (x, y, r, w = 2.7) => `<circle cx="${x}" cy="${y}" r="${r}" fill="none" stroke="${NAVY}" stroke-width="${w + 2}"/><circle cx="${x}" cy="${y}" r="${r}" fill="none" stroke="#fff" stroke-width="${w}"/>`;
// Shaft bundle with its mate axes; "cross" bundles carry a vertical red axis
function shaft(x, y, left, right, cross) {
  let s = '';
  if (!cross) s += line(x + 3, y - 16, x + 7, y - 34, GREEN, 3) + line(x + 7, y - 24, x + 10, y - 36, GREEN, 2);
  s += ring(x + 1.6, y - 2.6, 17) + ring(x - 1.6, y + 2.6, 17);
  s += `<ellipse cx="${x}" cy="${y}" rx="12.500" ry="11.500" fill="#eceef0" stroke="${NAVY}" stroke-width="1.200"/>`;
  s += `<path d="M${x - 10} ${y + 1}Q${x} ${y + 5} ${x + 10} ${y + 4}Q${x + 4} ${y + 12} ${x - 5} ${y + 10}Z" fill="#24292e"/>`;
  s += `<g fill="none" stroke="${NAVY}" stroke-width="1.100"><circle cx="${x + 1}" cy="${y - 1}" r="14.500"/><ellipse cx="${x}" cy="${y - 3}" rx="13" ry="9"/><path d="M${x - 12} ${y - 2}L${x + 12} ${y + 3}"/></g>`;
  if (cross) s += ring(x + 3, y - 5, 16, 1.4) + `<ellipse cx="${x}" cy="${y}" rx="14" ry="7" fill="none" stroke="${NAVY}" stroke-width="1.400"/><circle cx="${x}" cy="${y}" r="10" fill="none" stroke="${NAVY}"/>`;
  s += line(x + 5.5, y - 11.5, x - 4.5, y + 12, BLUE, 3.2);
  if (cross) s += line(x + 5, y - 22, x + 9, y - 36, RED, 3) + line(x + 2, y - 18, x + 4, y - 26, GREEN, 2) + line(x - 1, y + 14, x - 3, y + 24, RED, 2);
  for (let i = 0; i < left; i++) s += line(x - 29 - i * 2.2, y - 11 + i * 4.4, x - 17.5 - i * 2.2, y - 8.3 + i * 4.4, cross && !i ? GREEN : RED, 2.2);
  for (let i = 0; i < right; i++) s += line(x + 21 - i, y + (cross ? 0 : 7) + i * 3.4, x + 33 - i, y + (cross ? 3 : 10) + i * 3.4, cross ? GREEN : RED, 2.4);
  return s;
}
document.getElementById('shafts').innerHTML = [
  [956.3, 345.3, 3, 2], [969.7, 285.3, 4, 4, true], [889.3, 404, 3, 1], [879, 459.7, 2, 1], [779.7, 485, 2, 3, true],
  [858.7, 559.3, 2, 1], [907, 597.7, 4, 1]
].map(a => shaft(...a)).join('') +
  '<circle cx="946" cy="603" r="16" fill="#72787e"/><path d="M930 599A16 16 0 0 1 950 588L948 605Z" fill="#f6f8fa"/>' + ring(946, 603, 16) + line(929, 599, 944, 603, GREEN, 1.5) + line(913, 595, 925, 599, RED, 2.2) + line(924, 608, 934, 611, RED, 2) +
  [[962.7, 585.7, 3, 2], [1072.3, 513.3, 3, 4, true], [1140, 547, 3, 2], [1010.3, 644.3, 3, 2], [1085.3, 660.3, 2, 1], [1156, 642, 3, 1]].map(a => shaft(...a)).join('') +
  line(946, 602, 949, 595, BLUE, 3.6) + line(1149.5, 666, 1147.5, 677, GREEN, 2) + line(1065, 538, 1063, 549, RED, 2) + line(905, 612, 904, 621, RED, 1.5) + line(950, 583, 949, 573, GREEN, 2);
```
